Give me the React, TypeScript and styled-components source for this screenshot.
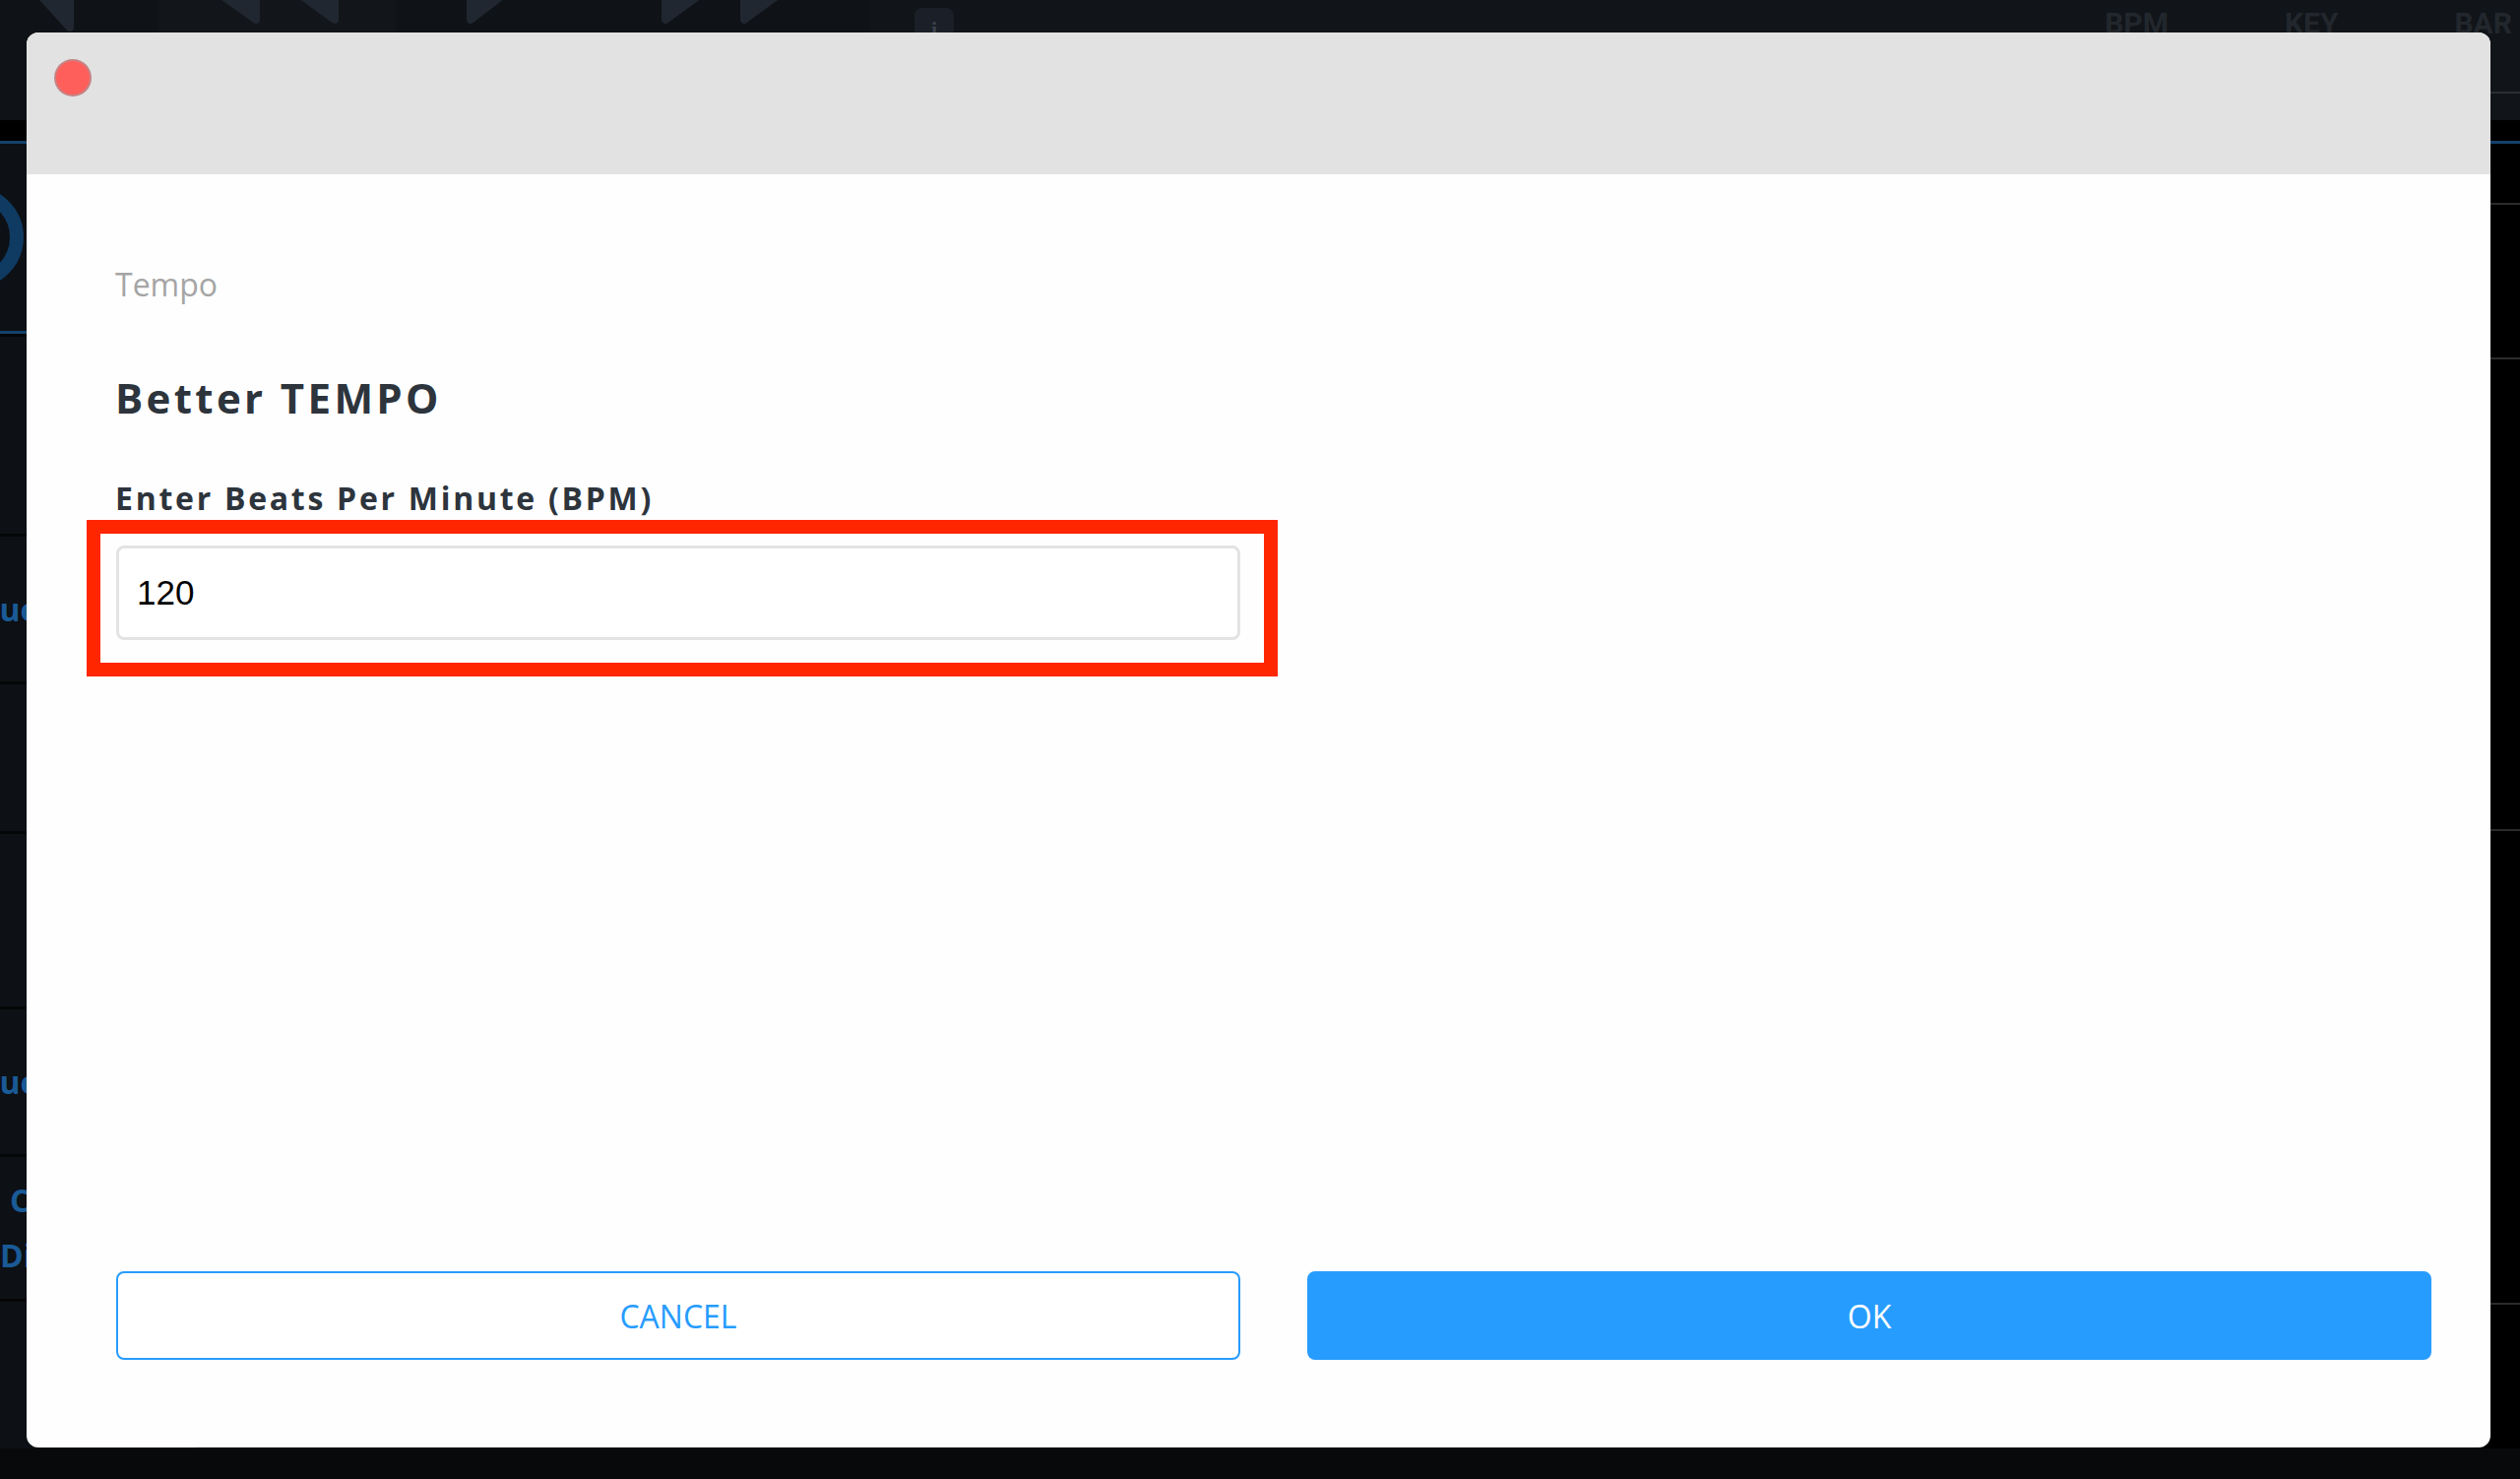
import React from 'react';
import styled, { createGlobalStyle } from 'styled-components';


const GlobalStyle = createGlobalStyle`
  html, body {
    margin: 0;
    padding: 0;
    background: #08090b;
    overflow: hidden;
  }
`;

// ---------- the app that sits behind the modal ----------

const Page = styled.div`
  position: relative;
  width: 2560px;
  height: 1502px;
  overflow: hidden;
  background: #08090b;
  display: flex;
  flex-direction: column;
  font-family: 'Open Sans', 'Liberation Sans', sans-serif;
`;

const TopBar = styled.div`
  height: 122px;
  flex-shrink: 0;
  display: flex;
  align-items: flex-start;
  background: #111418;
`;

interface IPanelProps {
  $width: number;
  $shade: string;
}

const TransportPanel = styled.div<IPanelProps>`
  width: ${(props: IPanelProps): number => props.$width}px;
  height: 100%;
  flex-shrink: 0;
  display: flex;
  align-items: flex-start;
  background: ${(props: IPanelProps): string => props.$shade};
`;

interface ITransportIconProps {
  $offset: number;
}

const TransportIcon = styled.svg<ITransportIconProps>`
  margin-left: ${(props: ITransportIconProps): number => props.$offset}px;
  flex-shrink: 0;
  display: block;
`;

const InfoButton = styled.div`
  margin: 8px 0 0 45px;
  width: 40px;
  height: 44px;
  border-radius: 8px;
  background: #1b2028;
  color: #3b424b;
  font: bold 22px/44px 'Liberation Serif', serif;
  text-align: center;
`;

const StatsArea = styled.div`
  flex: 1;
  height: 93px;
  display: flex;
  justify-content: flex-end;
  align-items: flex-start;
  gap: 118px;
  padding-right: 8px;
  border-bottom: 2px solid #2a2e33;
`;

const StatLabel = styled.div`
  margin-top: 9px;
  font: bold 30px/1 Roboto, 'Liberation Sans', sans-serif;
  color: #22272d;
`;

const SubBar = styled.div`
  height: 21px;
  flex-shrink: 0;
  background: #000;
  border-bottom: 3px solid #15416b;
`;

const Main = styled.div`
  flex: 1;
  display: flex;
  overflow: hidden;
`;

const BottomBar = styled.div`
  height: 31px;
  flex-shrink: 0;
  background: #08090b;
`;

const LeftRail = styled.div`
  width: 200px;
  flex-shrink: 0;
  display: flex;
  flex-direction: column;
  background: #0d1014;
`;

const RailLogo = styled.div`
  height: 190px;
  flex-shrink: 0;
  display: flex;
  align-items: center;
  border-bottom: 3px solid #15416b;
  overflow: hidden;
`;

const LogoRing = styled.div`
  width: 104px;
  height: 104px;
  margin-left: -80px;
  border-radius: 50%;
  border: 14px solid #0f3a62;
  box-sizing: border-box;
`;

interface IRailRowProps {
  $height: number;
}

const RailRow = styled.div<IRailRowProps>`
  height: ${(props: IRailRowProps): number => props.$height}px;
  flex-shrink: 0;
  box-sizing: border-box;
  display: flex;
  flex-direction: column;
  justify-content: center;
  border-top: 3px solid #050607;
  overflow: hidden;
`;

interface IRailLabelProps {
  $indent: number;
}

const RailLabel = styled.div<IRailLabelProps>`
  margin-left: ${(props: IRailLabelProps): number => props.$indent}px;
  font: bold 32px/56px 'Open Sans', sans-serif;
  color: #1a5a96;
  white-space: nowrap;
`;

const Track = styled.div`
  flex: 1;
  display: flex;
  flex-direction: column;
  background: #000;
`;

interface ITrackRowProps {
  $height: number;
}

const TrackRow = styled.div<ITrackRowProps>`
  height: ${(props: ITrackRowProps): number => props.$height}px;
  flex-shrink: 0;
  border-bottom: 2px solid #2b2b2b;
`;

// ---------- the modal ----------

const Dialog = styled.div`
  position: absolute;
  left: 27px;
  top: 33px;
  width: 2503px;
  height: 1437px;
  display: flex;
  flex-direction: column;
  background: #fefefe;
  border-radius: 12px;
  overflow: hidden;
`;

const DialogHeader = styled.div`
  height: 144px;
  flex-shrink: 0;
  box-sizing: border-box;
  padding: 27px 0 0 28px;
  background: #e2e2e2;
`;

const CloseDot = styled.div`
  width: 34px;
  height: 34px;
  border-radius: 50%;
  background: #ff5f5b;
  border: 2px solid rgba(150, 160, 165, 0.55);
`;

const DialogBody = styled.div`
  flex: 1;
  display: flex;
  flex-direction: column;
  padding: 0 60px 89px 90px;
`;

const Caption = styled.div`
  margin-top: 96px;
  font: 32px/1 'Open Sans', sans-serif;
  color: #a5a5a5;
`;

const Title = styled.div`
  margin-top: 78px;
  font: bold 42px/1 'Open Sans', sans-serif;
  letter-spacing: 0.08em;
  color: #2d343c;
`;

const FieldLabel = styled.label`
  margin-top: 65px;
  font: bold 32px/1 'Open Sans', sans-serif;
  letter-spacing: 0.085em;
  color: #2d343c;
`;

const Highlight = styled.div`
  margin: 6px 0 0 -29px;
  width: 1210px;
  box-sizing: border-box;
  padding: 12px 24px 23px 16px;
  border: 14px solid #ff2600;
`;

const BpmInput = styled.input`
  display: block;
  width: 100%;
  height: 96px;
  box-sizing: border-box;
  padding: 0 18px;
  border: 3px solid #e3e3e3;
  border-radius: 8px;
  background: #fff;
  font: 35px 'Liberation Sans', Arial, sans-serif;
  color: #000;
  outline: none;
`;

const Spacer = styled.div`
  flex: 1;
`;

const Actions = styled.div`
  display: grid;
  grid-template-columns: 1fr 1fr;
  gap: 68px;
  margin-left: 1px;
`;

interface IActionButtonProps {
  $primary?: boolean;
}

const ActionButton = styled.button<IActionButtonProps>`
  height: 90px;
  border-radius: 8px;
  border: 2px solid #279cff;
  background: ${(props: IActionButtonProps): string => (props.$primary ? '#269cff' : '#fff')};
  color: ${(props: IActionButtonProps): string => (props.$primary ? '#fff' : '#279cff')};
  font: 32px 'Open Sans', sans-serif;
  cursor: pointer;
`;

// ---------- pieces ----------

interface ITransportGlyphProps {
  offset: number;
  width: number;
  depth: number;
  pointsLeft: boolean;
}

const TransportGlyph = (props: ITransportGlyphProps): React.ReactElement => {
  const w = props.width;
  const d = props.depth;
  const points = props.pointsLeft ? `4,-20 ${w - 4},-20 ${w - 4},${d - 4}` : `4,-20 ${w - 4},-20 4,${d - 4}`;
  return (
    <TransportIcon $offset={props.offset} width={w} height={d + 2} viewBox={`0 0 ${w} ${d + 2}`}>
      <polygon points={points} fill='#212730' stroke='#212730' strokeWidth={8} strokeLinejoin='round' />
    </TransportIcon>
  );
};

interface IRailLine {
  text: string;
  indent: number;
}

const railRows: { height: number; lines: IRailLine[] }[] = [
  { height: 203, lines: [] },
  { height: 150, lines: [{ text: 'Cue', indent: -21 }] },
  { height: 152, lines: [] },
  { height: 178, lines: [] },
  { height: 150, lines: [{ text: 'Cue', indent: -21 }] },
  { height: 147, lines: [{ text: 'Cue', indent: 10 }, { text: 'Dial', indent: 0 }] },
  { height: 200, lines: [] },
];

const trackRows = [60, 155, 477, 479, 200];

export default function App(): React.ReactElement {
  const [bpm, setBpm] = React.useState('120');

  return (
    <Page>
      <GlobalStyle />
      <TopBar>
        <TransportPanel $width={161} $shade='#0f1216'>
          <TransportGlyph offset={23} width={52} depth={32} pointsLeft />
        </TransportPanel>
        <TransportPanel $width={241} $shade='#12161a'>
          <TransportGlyph offset={39} width={64} depth={24} pointsLeft />
          <TransportGlyph offset={17} width={63} depth={24} pointsLeft />
        </TransportPanel>
        <TransportPanel $width={482} $shade='#0f1216'>
          <TransportGlyph offset={72} width={60} depth={24} pointsLeft={false} />
          <TransportGlyph offset={138} width={63} depth={24} pointsLeft={false} />
          <TransportGlyph offset={17} width={63} depth={24} pointsLeft={false} />
        </TransportPanel>
        <InfoButton>i</InfoButton>
        <StatsArea>
          <StatLabel>BPM</StatLabel>
          <StatLabel>KEY</StatLabel>
          <StatLabel>BAR</StatLabel>
        </StatsArea>
      </TopBar>
      <SubBar />
      <Main>
        <LeftRail>
          <RailLogo>
            <LogoRing />
          </RailLogo>
          {railRows.map((row, index: number): React.ReactElement => (
            <RailRow key={index} $height={row.height}>
              {row.lines.map((line: IRailLine): React.ReactElement => (
                <RailLabel key={line.text} $indent={line.indent}>{line.text}</RailLabel>
              ))}
            </RailRow>
          ))}
        </LeftRail>
        <Track>
          {trackRows.map((height: number, index: number): React.ReactElement => (
            <TrackRow key={index} $height={height} />
          ))}
        </Track>
      </Main>
      <BottomBar />

      <Dialog role='dialog'>
        <DialogHeader>
          <CloseDot />
        </DialogHeader>
        <DialogBody>
          <Caption>Tempo</Caption>
          <Title>Better TEMPO</Title>
          <FieldLabel htmlFor='bpm-input'>Enter Beats Per Minute (BPM)</FieldLabel>
          <Highlight>
            <BpmInput id='bpm-input' value={bpm} onChange={(event: React.ChangeEvent<HTMLInputElement>): void => setBpm(event.target.value)} />
          </Highlight>
          <Spacer />
          <Actions>
            <ActionButton>CANCEL</ActionButton>
            <ActionButton $primary>OK</ActionButton>
          </Actions>
        </DialogBody>
      </Dialog>
    </Page>
  );
}
